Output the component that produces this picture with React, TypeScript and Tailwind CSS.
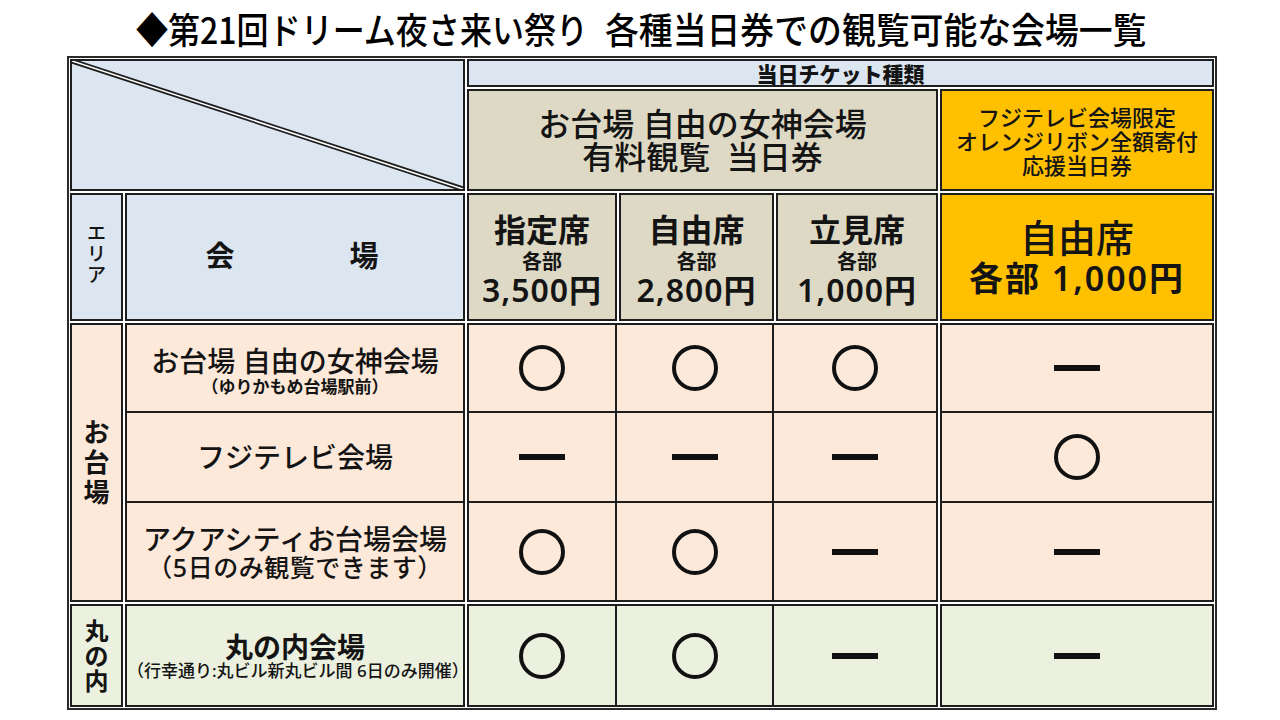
import React from 'react'

const cell = 'border-2 border-[#1e1e1e] flex flex-col items-center justify-center text-[#141414]'
const blue = 'bg-[#dce6f1]'
const tan = 'bg-[#ddd9c4]'
const orange = 'bg-[#ffc000]'
const peach = 'bg-[#fde9d9]'
const green = 'bg-[#ebf1de]'

function Maru() {
  return <div className="w-[46px] h-[46px] rounded-full border-[4px] border-[#111]" />
}

function Dash() {
  return <div className="w-[46px] h-[6px] bg-[#111]" />
}

function Vertical({ chars, size }: { chars: string[]; size: string }) {
  return (
    <div className={`flex flex-col items-center font-bold ${size}`}>
      {chars.map((c, i) => (
        <span key={i}>{c}</span>
      ))}
    </div>
  )
}

export default function App() {
  return (
    <div className="w-[1280px] h-[720px] bg-white font-['Noto_Sans','Noto_Sans_CJK_JP',sans-serif]">
      <div className="h-[56px] flex items-center pl-[136px] text-[36px] font-medium leading-none text-black font-['Noto_Sans_CJK_JP',sans-serif] whitespace-nowrap">
        <div className="w-[469px]">
          <span className="inline-block origin-left scale-x-[0.89]">◆第21回ドリーム夜さ来い祭り</span>
        </div>
        <div className="w-[545px]">
          <span className="inline-block origin-left scale-x-[0.94]">各種当日券での観覧可能な会場一覧</span>
        </div>
      </div>

      <div className="ml-[67px] w-[1150px] border-2 border-[#2a2a2a] p-[1px] bg-white">
        <div className="grid grid-cols-[53px_340px_150px_155px_162px_274px] grid-rows-[28px_102px_128px_90px_88px_97px_103px] gap-[2px]">
          {/* diagonal corner */}
          <div className={`${cell} ${blue} relative col-start-1 col-span-2 row-start-1 row-span-2`}>
            <svg className="absolute inset-0 w-full h-full" preserveAspectRatio="none">
              <line x1="0" y1="0" x2="100%" y2="100%" stroke="#1e1e1e" strokeWidth="5" />
              <line x1="0" y1="0" x2="100%" y2="100%" stroke="#ffffff" strokeWidth="1.6" />
            </svg>
          </div>

          <div className={`${cell} ${blue} col-start-3 col-span-4 row-start-1`}>
            <span className="text-[21px] font-black leading-none font-['Noto_Sans_CJK_JP',sans-serif]">当日チケット種類</span>
          </div>

          <div className={`${cell} ${tan} col-start-3 col-span-3 row-start-2 text-[32px] font-medium leading-[33px]`}>
            <span>お台場 自由の女神会場</span>
            <span className="whitespace-pre">有料観覧  当日券</span>
          </div>

          <div className={`${cell} ${orange} col-start-6 row-start-2 text-[22px] font-medium leading-[24px] pt-[2px]`}>
            <span>フジテレビ会場限定</span>
            <span>オレンジリボン全額寄付</span>
            <span>応援当日券</span>
          </div>

          {/* header row */}
          <div className={`${cell} ${blue} col-start-1 row-start-3`}>
            <div className="flex flex-col items-center text-[19px] font-medium leading-[21px] mt-[-6px]">
              <span>エ</span>
              <span>リ</span>
              <span>ア</span>
            </div>
          </div>
          <div className={`${cell} ${blue} col-start-2 row-start-3`}>
            <div className="flex gap-[115px] text-[29px] font-bold leading-none mt-[-4px] mr-[6px]">
              <span>会</span>
              <span>場</span>
            </div>
          </div>
          {[
            ['指定席', '3,500円'],
            ['自由席', '2,800円'],
            ['立見席', '1,000円'],
          ].map(([seat, price], i) => (
            <div
              key={seat}
              className={`${cell} ${tan} row-start-3 ${i === 0 ? 'col-start-3' : i === 1 ? 'col-start-4' : 'col-start-5'}`}
            >
              <span className="text-[32px] font-bold leading-[40px] font-['Noto_Sans_CJK_JP',sans-serif]">{seat}</span>
              <span className="text-[20px] font-bold leading-[25px] font-['Noto_Sans_CJK_JP',sans-serif]">各部</span>
              <span className="text-[32px] font-semibold leading-[34px] tracking-[1px]">{price}</span>
            </div>
          ))}
          <div className={`${cell} ${orange} col-start-6 row-start-3`}>
            <span className="text-[38px] font-medium leading-[42px] font-['Noto_Sans_CJK_JP',sans-serif]">自由席</span>
            <span className="text-[34px] font-semibold leading-[42px] tracking-[2px]">各部 1,000円</span>
          </div>

          {/* お台場 area */}
          <div className={`${cell} ${peach} col-start-1 row-start-4 row-span-3`}>
            <Vertical chars={['お', '台', '場']} size="text-[26px] leading-[30px] mt-[-2px]" />
          </div>

          <div className={`${cell} ${peach} col-start-2 row-start-4 pt-[4px]`}>
            <span className="text-[28px] font-medium leading-[30px]">お台場 自由の女神会場</span>
            <span className="text-[17px] font-bold leading-[19px] font-['Noto_Sans_CJK_JP',sans-serif]">（ゆりかもめ台場駅前）</span>
          </div>
          <div className={`${cell} ${peach} col-start-3 row-start-4`}><Maru /></div>
          <div className={`${cell} ${peach} col-start-4 row-start-4 ml-[-4px]`}><Maru /></div>
          <div className={`${cell} ${peach} col-start-5 row-start-4 ml-[-4px]`}><Maru /></div>
          <div className={`${cell} ${peach} col-start-6 row-start-4`}><Dash /></div>

          <div className={`${cell} ${peach} col-start-2 row-start-5 mt-[-4px]`}>
            <span className="text-[28px] font-medium leading-[30px]">フジテレビ会場</span>
          </div>
          <div className={`${cell} ${peach} col-start-3 row-start-5 mt-[-4px]`}><Dash /></div>
          <div className={`${cell} ${peach} col-start-4 row-start-5 mt-[-4px] ml-[-4px]`}><Dash /></div>
          <div className={`${cell} ${peach} col-start-5 row-start-5 mt-[-4px] ml-[-4px]`}><Dash /></div>
          <div className={`${cell} ${peach} col-start-6 row-start-5 mt-[-4px]`}><Maru /></div>

          <div className={`${cell} ${peach} col-start-2 row-start-6 mt-[-4px]`}>
            <span className="text-[28px] font-medium leading-[30px]">アクアシティお台場会場</span>
            <span className="text-[25px] font-medium leading-[26px] tracking-[0.5px]">（5日のみ観覧できます）</span>
          </div>
          <div className={`${cell} ${peach} col-start-3 row-start-6 mt-[-4px]`}><Maru /></div>
          <div className={`${cell} ${peach} col-start-4 row-start-6 mt-[-4px] ml-[-4px]`}><Maru /></div>
          <div className={`${cell} ${peach} col-start-5 row-start-6 mt-[-4px] ml-[-4px]`}><Dash /></div>
          <div className={`${cell} ${peach} col-start-6 row-start-6 mt-[-4px]`}><Dash /></div>

          {/* 丸の内 area */}
          <div className={`${cell} ${green} col-start-1 row-start-7`}>
            <Vertical chars={['丸', 'の', '内']} size="text-[24px] leading-[25px]" />
          </div>
          <div className={`${cell} ${green} col-start-2 row-start-7`}>
            <span className="text-[28px] font-bold leading-[30px] font-['Noto_Sans_CJK_JP',sans-serif]">丸の内会場</span>
            <span className="text-[17px] font-medium leading-[20px]">（行幸通り:丸ビル新丸ビル間 6日のみ開催）</span>
          </div>
          <div className={`${cell} ${green} col-start-3 row-start-7`}><Maru /></div>
          <div className={`${cell} ${green} col-start-4 row-start-7 ml-[-4px]`}><Maru /></div>
          <div className={`${cell} ${green} col-start-5 row-start-7 ml-[-4px]`}><Dash /></div>
          <div className={`${cell} ${green} col-start-6 row-start-7`}><Dash /></div>
        </div>
      </div>
    </div>
  )
}
